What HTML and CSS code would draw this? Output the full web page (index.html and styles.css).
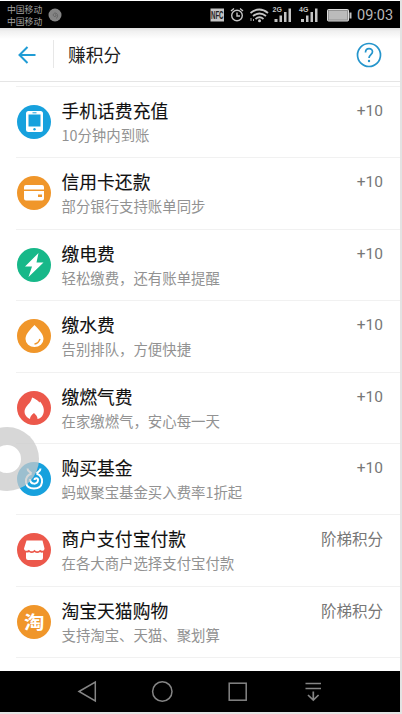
FILE: index.html
```html
<!DOCTYPE html>
<html lang="zh-CN">
<head>
<meta charset="utf-8">
<title>赚积分</title>
<link rel="stylesheet" href="styles.css">
</head>
<body>
<div class="phone">
  <div class="status">
    <div class="carriers"><span>中国移动</span><span>中国移动</span></div>
    <svg class="spiral" width="14" height="14" viewBox="0 0 14 14"><circle cx="7" cy="7" r="6.500" fill="#858585"/><path d="M7 7c1-1 2 1 0 1.600-2 0-2.500-3 0-3.600 3 0 3.500 4 1 5.500" fill="none" stroke="#666"/></svg>
    <svg class="signals" width="144" height="27" viewBox="209 1 144 27">
      <rect x="210.500" y="8.500" width="13.500" height="13" fill="#c4c4c4"/>
      <text class="nfc" x="211" y="19" textLength="12.500" lengthAdjust="spacingAndGlyphs">NFC</text>
      <g fill="none" stroke="#c4c4c4" stroke-width="1.400">
        <circle cx="237" cy="15.500" r="5.300"/><path d="M237 12.500v3.500h3M231 11l3-2.500M243 11l-3-2.500"/>
        <path d="M250.500 13q9-7 17.500 0M253 16q6.500-5 13 0M255.500 19q4-3.500 8 0" stroke-width="1.800"/>
      </g>
      <circle cx="259.500" cy="20.800" r="1.500" fill="#ccc"/>
      <path d="M251 18v3M253.500 19v2" stroke="#aaa"/>
      <g fill="#c4c4c4">
        <path d="M274.500 19h3v3h-3zM279.500 15.500h2.500V22h-2.500zM284 12h2.500v10H284zM288.500 8.500h2.500V22h-2.500z"/>
        <path d="M301 19h3v3h-3zM306 15.500h2.500V22H306zM310.500 12h2.500v10h-2.500zM315 8.500h2.500V22H315z"/>
        <text class="net" x="272.500" y="11.500">2G</text><text class="net" x="299" y="11.500">4G</text>
        <rect x="349.500" y="12.500" width="2" height="6"/>
      </g>
      <rect x="327.500" y="9.500" width="21" height="11.500" rx="1" fill="#bbb" stroke="#ddd"/><rect x="328.500" y="10.500" width="19" height="9.500" fill="none" stroke="#777" stroke-width=".6"/>
    </svg>
    <span class="clock">09:03</span>
  </div>
  <header class="header">
    <svg class="back" width="18" height="18" viewBox="0 0 18 18"><path d="M17.500 9H2M9.500 1L1.500 9l8 8" fill="none" stroke="#209cd5" stroke-width="2"/></svg>
    <h1>赚积分</h1>
    <svg class="help" width="26" height="26" viewBox="0 0 26 26"><g fill="none" stroke="#2595cc" stroke-width="1.700"><circle cx="13" cy="13" r="11.500"/><path d="M9.500 10.500c0-5 7-5 7-.7 0 2.600-3.500 3-3.500 6.200"/></g><circle cx="13" cy="19" r="1.200" fill="#2595cc"/></svg>
  </header>
  <main class="list">
    <section class="row">
      <svg class="icon blue" viewBox="0 0 34 34"><rect x="9" y="6" width="17" height="21" rx="2.500" fill="#fff"/><rect x="11.500" y="9.500" width="12" height="12" fill="#17a1dd"/><circle cx="17.500" cy="24.200" r="1.200" fill="#17a1dd"/><path d="M15.500 7.800h4" stroke="#17a1dd"/></svg>
      <div class="copy"><h2>手机话费充值</h2><p>10分钟内到账</p></div><span class="points num">+10</span>
    </section>
    <section class="row">
      <svg class="icon orange" viewBox="0 0 34 34"><path d="M9 9h16a2 2 0 0 1 2 2v2.500H7V11a2 2 0 0 1 2-2zM7 15h20v7.500a2 2 0 0 1-2 2H9a2 2 0 0 1-2-2z" fill="#fff"/><rect x="21" y="18.500" width="4" height="2.500" fill="#f0962a"/></svg>
      <div class="copy"><h2>信用卡还款</h2><p>部分银行支持账单同步</p></div><span class="points num">+10</span>
    </section>
    <section class="row">
      <svg class="icon green" viewBox="0 0 34 34"><path d="M21.500 5L8 18.500h7L11.500 29 26.500 14.500h-7z" fill="#fff"/></svg>
      <div class="copy"><h2>缴电费</h2><p>轻松缴费，还有账单提醒</p></div><span class="points num">+10</span>
    </section>
    <section class="row">
      <svg class="icon orange" viewBox="0 0 34 34"><path d="M17.500 6c3.500 4 9 8.500 9 14a9 8 0 0 1-18 0c0-5.500 5.500-10 9-14z" fill="#fff"/><path d="M17.500 25q4-.5 5.500-5" fill="none" stroke="#f0962a" stroke-width="1.500"/></svg>
      <div class="copy"><h2>缴水费</h2><p>告别排队，方便快捷</p></div><span class="points num">+10</span>
    </section>
    <section class="row">
      <svg class="icon red" viewBox="0 0 34 34"><path d="M13 28C7.500 25.500 6.500 20.500 8.500 17c2-3.500 6-6 6.500-10.500 2.500 1 5.500 2.500 7.500 5l.5-1c3.500 4 5 9 3 13-1 2.500-3 4-5.500 4.500 0-2.500-1.500-4-3.500-6-2.200 1.500-4 3.500-4 6z" fill="#fff"/></svg>
      <div class="copy"><h2>缴燃气费</h2><p>在家缴燃气，安心每一天</p></div><span class="points num">+10</span>
    </section>
    <section class="row">
      <svg class="icon blue" viewBox="0 0 34 34"><g fill="none" stroke="#fff" stroke-width="2"><path d="M10.500 6.500c0 3 2.500 3 4 5M23.500 6.500c0 3-2.500 3-4 5M14.500 11.500C6 15 7.500 26.500 17 26.500s11-11.500 2.500-15"/><path d="M13 17c0 6 8 6 8 1 0-2.500-3.500-2.500-3.500 0"/></g></svg>
      <div class="copy"><h2>购买基金</h2><p>蚂蚁聚宝基金买入费率1折起</p></div><span class="points num">+10</span>
    </section>
    <section class="row">
      <svg class="icon red" viewBox="0 0 34 34"><path d="M9.500 7.500h16l2 8c0 2.500-3 3-4.500 1.300-1.500 2-3.800 2-5.500 0-1.700 2-4 2-5.500 0C10.500 18.500 7 18 7 15.500zM9 19.500c1.500.3 2.500 0 3-.5 1.500 1.200 4 1.200 5.500 0 1.500 1.200 4 1.200 5.500 0 .8.600 1.800.8 3 .5v5.500a2 2 0 0 1-2 2H11a2 2 0 0 1-2-2z" fill="#fff"/></svg>
      <div class="copy"><h2>商户支付宝付款</h2><p>在各大商户选择支付宝付款</p></div><span class="points">阶梯积分</span>
    </section>
    <section class="row">
      <svg class="icon orange" viewBox="0 0 34 34"><text class="tao" x="7" y="23.500" textLength="20.500" lengthAdjust="spacingAndGlyphs">淘</text></svg>
      <div class="copy"><h2>淘宝天猫购物</h2><p>支持淘宝、天猫、聚划算</p></div><span class="points">阶梯积分</span>
    </section>
  </main>
  <nav class="nav">
    <svg width="400" height="41" viewBox="0 671 400 41"><g fill="none" stroke="#858585" stroke-width="1.500"><path d="M79 691.500L95.300 682v19z"/><circle cx="162.300" cy="691.500" r="9.700"/><rect x="229.200" y="683.200" width="17" height="17"/><path d="M305.500 683.500h15.500M305.500 688.500h15.500M313.300 691.500v8M308 695l5.300 5 5.300-5" stroke-width="1.700"/></g></svg>
  </nav>
  <div class="touch"></div>
</div>
</body>
</html>
```
FILE: styles.css
```css
* { box-sizing: border-box; }
body {
  margin: 0;
  background: #e3e3e3;
  font-family: Roboto, "Noto Sans CJK SC", sans-serif;
}
h1, h2, p { margin: 0; font-weight: 400; }
svg { display: block; flex: none; }
.phone {
  position: relative;
  width: 400px;
  height: 712px;
  padding-top: 1px;
  background: #fff;
  overflow: hidden;
  display: flex;
  flex-direction: column;
}
.status {
  flex: none;
  height: 27px;
  background: #000;
  color: #b8b8b8;
  display: flex;
  align-items: center;
}
.carriers {
  width: 48px;
  padding: 2px 0 0 7px;
  font: 8.800px/12px "Noto Sans CJK SC", sans-serif;
  color: #a0a0a0;
  white-space: nowrap;
  display: flex;
  flex-direction: column;
}
.signals { margin-left: 147px; }
.nfc { font: 700 10px "Liberation Sans", sans-serif; fill: #222; }
.net { font: 700 7px "Liberation Sans", sans-serif; }
.clock {
  margin: 2px 0 0 4px;
  font-size: 14.500px;
}
.header {
  flex: none;
  height: 54px;
  border-bottom: 1px solid #e5e5e5;
  background: linear-gradient(#dedede 0, #f0f0f0 3px, #fff 11px);
  display: flex;
  align-items: center;
  padding: 0 18px;
}
h1 {
  margin: -1px 0 0 17px;
  padding-left: 14px;
  border-left: 1px solid #e7e7e7;
  font: 17.700px/28px "Noto Sans CJK SC", sans-serif;
  color: #1c1c1c;
}
.help { margin-left: auto; }
.list {
  flex: 1;
  padding: 4px 0 0 16px;
}
.row {
  height: 71.400px;
  border-top: 1px solid #f1f1f1;
  display: flex;
  padding-right: 17px;
}
.row:last-child { height: 72.400px; border-bottom: 1px solid #f1f1f1; }
.icon {
  width: 34px;
  height: 34px;
  margin: 18px 11px 0 .500px;
  border-radius: 50%;
}
.blue { background: #17a1dd; }
.orange { background: #f0962a; }
.green { background: #17b889; }
.red { background: #ec584b; }
.tao { font: 700 18px "Noto Sans CJK SC", sans-serif; fill: #fff; }
.copy { flex: 1; padding-top: 11px; }
h2 {
  font: 17.800px/25px "Noto Sans CJK SC", sans-serif;
  color: #111;
  -webkit-text-stroke: .12px #111;
}
p {
  font: 14.400px/23px "Noto Sans CJK SC", sans-serif;
  color: #929292;
}
.points {
  padding-top: 11px;
  font: 15.500px/25px "Noto Sans CJK SC", sans-serif;
  color: #777;
}
.num {
  padding-top: 12px;
  font: 15.500px/25px Roboto, sans-serif;
}
.nav {
  flex: none;
  height: 41px;
  background: #000;
}
.touch {
  position: absolute;
  left: -25px;
  top: 427px;
  width: 64px;
  height: 64px;
  border: 18px solid rgba(202, 202, 202, .75);
  border-radius: 50%;
  background: rgba(255, 255, 255, .85);
  background-clip: padding-box;
}
```
